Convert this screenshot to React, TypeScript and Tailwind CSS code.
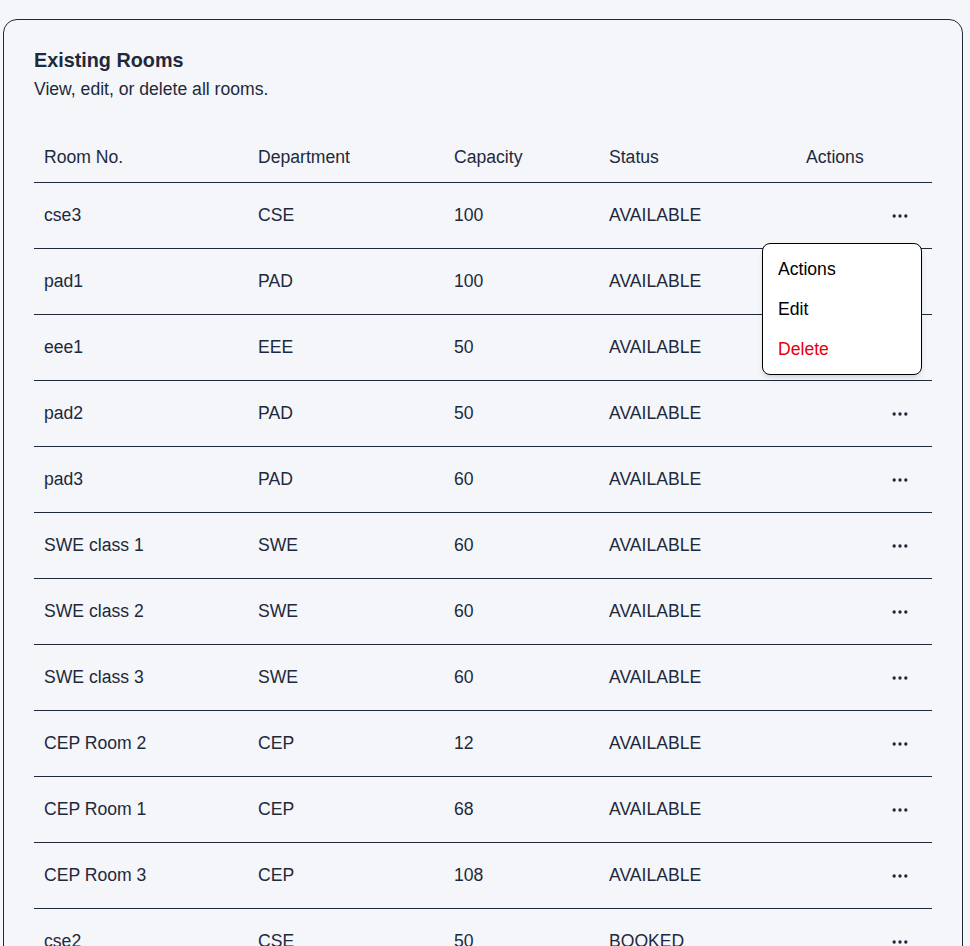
import { Ellipsis } from "lucide-react";

type Room = { no: string; dept: string; capacity: number; status: string };

const ROOMS: Room[] = [
  { no: "cse3", dept: "CSE", capacity: 100, status: "AVAILABLE" },
  { no: "pad1", dept: "PAD", capacity: 100, status: "AVAILABLE" },
  { no: "eee1", dept: "EEE", capacity: 50, status: "AVAILABLE" },
  { no: "pad2", dept: "PAD", capacity: 50, status: "AVAILABLE" },
  { no: "pad3", dept: "PAD", capacity: 60, status: "AVAILABLE" },
  { no: "SWE class 1", dept: "SWE", capacity: 60, status: "AVAILABLE" },
  { no: "SWE class 2", dept: "SWE", capacity: 60, status: "AVAILABLE" },
  { no: "SWE class 3", dept: "SWE", capacity: 60, status: "AVAILABLE" },
  { no: "CEP Room 2", dept: "CEP", capacity: 12, status: "AVAILABLE" },
  { no: "CEP Room 1", dept: "CEP", capacity: 68, status: "AVAILABLE" },
  { no: "CEP Room 3", dept: "CEP", capacity: 108, status: "AVAILABLE" },
  { no: "cse2", dept: "CSE", capacity: 50, status: "BOOKED" },
];

const COLS = "grid grid-cols-[214px_196px_155px_197px_136px]";

/* ─────────────────────── Row menu ─────────────────────── */
function RowMenu() {
  return (
    <div className="absolute left-[728px] top-[110px] z-10 w-[160px] rounded-lg border border-black bg-white py-[5px] shadow-md">
      <div className="flex h-10 items-center px-[15px] text-black">Actions</div>
      <div className="flex h-10 items-center px-[15px] text-black">Edit</div>
      <div className="flex h-10 items-center px-[15px] text-[#e7000b]">Delete</div>
    </div>
  );
}

export default function App() {
  return (
    <div
      className="min-h-screen bg-[#f4f6fa] pl-[3px] pr-[7px] pt-[19px] text-[17.6px] text-[#1e293b]"
      style={{ fontFamily: '"Liberation Sans", Arial, sans-serif' }}
    >
      <div className="rounded-[14px] border border-[#1e293b] px-[30px] pt-[26px] pb-8">
        <h2 className="text-[19.8px] font-bold leading-7">Existing Rooms</h2>
        <p className="mt-[3px] leading-6">View, edit, or delete all rooms.</p>

        <div className="relative mt-8">
          <div className={`${COLS} h-[50px] items-center border-b border-[#1e293b]`}>
            <div className="px-[10px]">Room No.</div>
            <div className="px-[10px]">Department</div>
            <div className="px-[10px]">Capacity</div>
            <div className="px-[10px]">Status</div>
            <div className="px-[10px]">Actions</div>
          </div>

          {ROOMS.map((r) => (
            <div key={r.no} className={`${COLS} h-[66px] items-center border-b border-[#1e293b]`}>
              <div className="px-[10px]">{r.no}</div>
              <div className="px-[10px]">{r.dept}</div>
              <div className="px-[10px]">{r.capacity}</div>
              <div className="px-[10px]">{r.status}</div>
              <div className="flex justify-end pr-[20px]">
                <button className="flex h-6 w-6 items-center justify-center text-[#1e293b]">
                  <Ellipsis size={20} strokeWidth={2} />
                </button>
              </div>
            </div>
          ))}

          <RowMenu />
        </div>
      </div>
    </div>
  );
}
